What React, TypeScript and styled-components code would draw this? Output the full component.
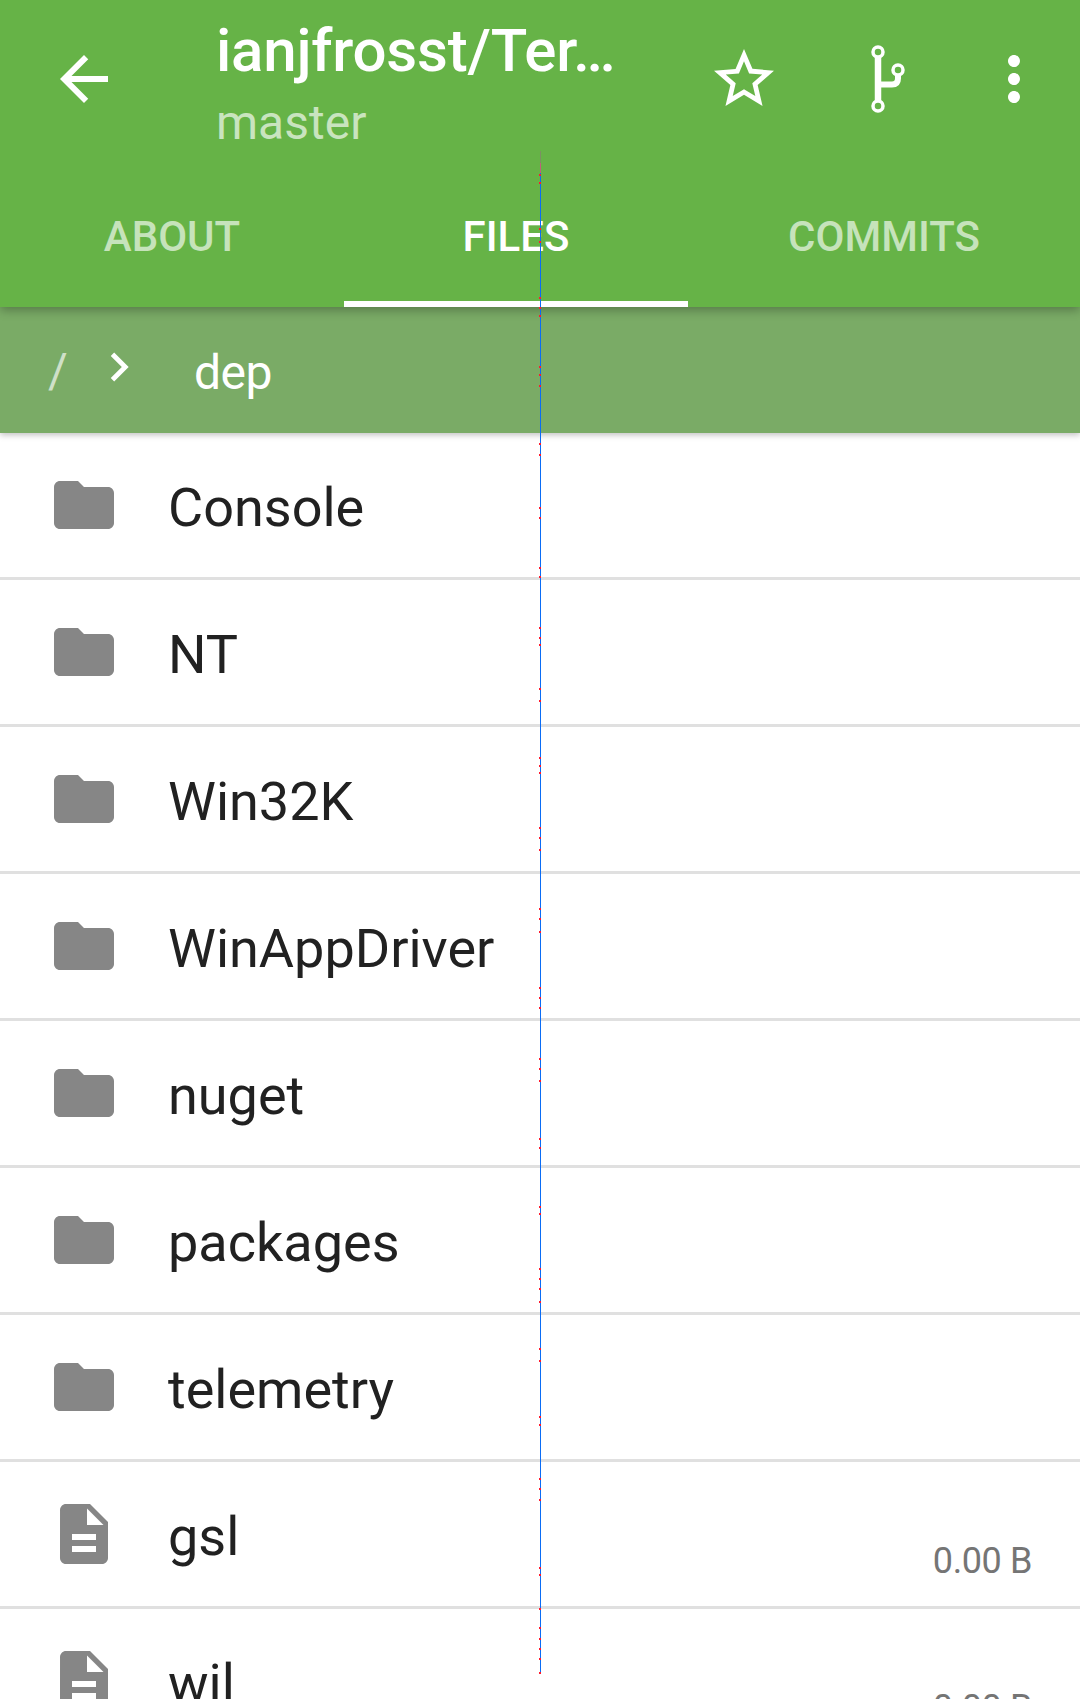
import React from 'react'
import styled, { createGlobalStyle } from 'styled-components'

const entries = [
    { name: 'Console', kind: 'folder' },
    { name: 'NT', kind: 'folder' },
    { name: 'Win32K', kind: 'folder' },
    { name: 'WinAppDriver', kind: 'folder' },
    { name: 'nuget', kind: 'folder' },
    { name: 'packages', kind: 'folder' },
    { name: 'telemetry', kind: 'folder' },
    { name: 'gsl', kind: 'file', size: '0.00 B' },
    { name: 'wil', kind: 'file', size: '0.00 B' },
]

const tabs = [
    { label: 'ABOUT', active: false },
    { label: 'FILES', active: true },
    { label: 'COMMITS', active: false },
]

// layout-bounds marks left on the capture
const traceDots = [
    174, 182, 228, 241, 297, 307, 315, 366, 374, 385, 443, 454, 507, 517, 567, 576, 627, 637, 644, 688, 700,
    757, 765, 772, 827, 837, 849, 908, 918, 931, 987, 997, 1007, 1058, 1068, 1080, 1138, 1147, 1206, 1213,
    1268, 1278, 1288, 1301, 1348, 1360, 1416, 1424, 1478, 1488, 1499, 1567, 1574, 1608, 1627, 1638, 1648,
    1658, 1672,
]

export default function App() {
    return (
        <Screen>
            <GlobalStyle />
            <AppBar>
                <Toolbar>
                    <NavButton>
                        <Icon viewBox='0 0 24 24'>
                            <path d='M20 11H7.83l5.59-5.59L12 4l-8 8 8 8 1.41-1.41L7.83 13H20v-2z' />
                        </Icon>
                    </NavButton>
                    <Titles>
                        <Title>ianjfrosst/Ter…</Title>
                        <Subtitle>master</Subtitle>
                    </Titles>
                    <ActionButton>
                        <Icon viewBox='0 0 24 24'>
                            <path d='M22 9.24l-7.19-.62L12 2 9.19 8.63 2 9.24l5.46 4.73L5.82 21 12 17.27 18.18 21l-1.63-7.03L22 9.24zM12 15.4l-3.76 2.27 1-4.28-3.32-2.88 4.38-.38L12 6.1l1.71 4.04 4.38.38-3.32 2.88 1 4.28L12 15.4z' />
                        </Icon>
                    </ActionButton>
                    <ActionButton>
                        <Icon viewBox='0 0 72 72'>
                            <g fill='none' stroke='#fff'>
                                <circle cx='26' cy='9' r='5' strokeWidth='3.5' />
                                <circle cx='26' cy='63' r='5' strokeWidth='3.5' />
                                <circle cx='46' cy='27' r='5' strokeWidth='3.5' />
                                <path d='M26 14v44' strokeWidth='6.5' />
                                <path d='M26 41.5h14q6 0 6-6V32' strokeWidth='6' />
                            </g>
                        </Icon>
                    </ActionButton>
                    <OverflowButton>
                        <Icon viewBox='0 0 24 24'>
                            <path d='M12 8c1.1 0 2-.9 2-2s-.9-2-2-2-2 .9-2 2 .9 2 2 2zm0 2c-1.1 0-2 .9-2 2s.9 2 2 2 2-.9 2-2-.9-2-2-2zm0 6c-1.1 0-2 .9-2 2s.9 2 2 2 2-.9 2-2-.9-2-2-2z' />
                        </Icon>
                    </OverflowButton>
                </Toolbar>
                <TabBar>
                    {tabs.map(tab => (
                        <Tab key={tab.label} $active={tab.active}>
                            {tab.label}
                        </Tab>
                    ))}
                </TabBar>
            </AppBar>
            <Breadcrumb>
                <RootCrumb>/</RootCrumb>
                <CrumbChevron viewBox='0 0 24 24'>
                    <path d='M10 6L8.59 7.41 13.17 12l-4.58 4.59L10 18l6-6z' />
                </CrumbChevron>
                <Crumb>dep</Crumb>
            </Breadcrumb>
            <FileList>
                {entries.map(entry => (
                    <FileRow key={entry.name}>
                        <RowIcon viewBox='0 0 24 24'>
                            {entry.kind === 'folder' ? (
                                <path d='M10 4H4c-1.1 0-1.99.9-1.99 2L2 18c0 1.1.9 2 2 2h16c1.1 0 2-.9 2-2V8c0-1.1-.9-2-2-2h-8l-2-2z' />
                            ) : (
                                <path d='M14 2H6c-1.1 0-1.99.9-1.99 2L4 20c0 1.1.89 2 1.99 2H18c1.1 0 2-.9 2-2V8l-6-6zm2 16H8v-2h8v2zm0-4H8v-2h8v2zm-3-5V3.5L18.5 9H13z' />
                            )}
                        </RowIcon>
                        <FileName>{entry.name}</FileName>
                        {entry.size && <FileSize>{entry.size}</FileSize>}
                    </FileRow>
                ))}
            </FileList>
            <TraceOverlay viewBox='0 0 3 1699'>
                <rect x='1' y='151' width='1' height='12' fill='#7d8f63' />
                <rect x='1' y='163' width='1' height='10' fill='#c0607a' />
                <rect x='1' y='173' width='1' height='1500' fill='#0a6cf5' />
                {traceDots.map(y => (
                    <rect key={y} x='0' y={y} width='2' height='2' fill='#ff1a2e' />
                ))}
            </TraceOverlay>
        </Screen>
    )
}

const GlobalStyle = createGlobalStyle`
    html, body {
        margin: 0;
        padding: 0;
        background: #fff;
    }
`

const Screen = styled.div`
    position: relative;
    width: 1080px;
    height: 1699px;
    overflow: hidden;
    background: #fff;
    font-family: Roboto, 'Liberation Sans', sans-serif;
`

const AppBar = styled.header`
    position: relative;
    z-index: 2;
    height: 307px;
    background: #66b347;
    box-shadow: 0 3px 10px rgba(0, 0, 0, 0.3);
`

const Toolbar = styled.div`
    display: flex;
    align-items: flex-start;
    height: 163px;
    padding-right: 12px;
`

const NavButton = styled.div`
    display: flex;
    align-items: center;
    justify-content: center;
    flex: none;
    width: 120px;
    height: 158px;
    padding-left: 48px;
    box-sizing: border-box;
`

const ActionButton = styled.div`
    display: flex;
    align-items: center;
    justify-content: center;
    flex: none;
    width: 144px;
    height: 158px;
`

const OverflowButton = styled(ActionButton)`
    width: 108px;
`

const Icon = styled.svg`
    flex: none;
    width: 72px;
    height: 72px;
    fill: #fff;
`

const Titles = styled.div`
    flex: 1;
    min-width: 0;
    padding-left: 96px;
`

const Title = styled.div`
    margin-top: 16px;
    font-size: 60px;
    font-weight: 500;
    line-height: 70px;
    letter-spacing: -0.2px;
    color: #fff;
    white-space: nowrap;
`

const Subtitle = styled.div`
    margin-top: 9px;
    font-size: 48px;
    line-height: 56px;
    color: #c9e4bf;
`

const TabBar = styled.div`
    display: grid;
    grid-template-columns: 344px 344px 392px;
    height: 144px;
`

const Tab = styled.div<{ $active: boolean }>`
    display: flex;
    align-items: center;
    justify-content: center;
    box-sizing: border-box;
    height: 144px;
    padding-top: 8px;
    font-size: 42px;
    font-weight: 500;
    color: ${p => (p.$active ? '#fff' : '#c6e3bb')};
    border-bottom: 6px solid ${p => (p.$active ? '#fff' : 'transparent')};
`

const Breadcrumb = styled.nav`
    position: relative;
    z-index: 1;
    display: flex;
    align-items: center;
    height: 126px;
    padding-left: 48px;
    background: #7aab66;
    box-shadow: 0 2px 6px rgba(0, 0, 0, 0.25);
`

const RootCrumb = styled.span`
    flex: none;
    width: 42px;
    font-size: 48px;
    color: #cfe0c8;
`

const CrumbChevron = styled.svg`
    flex: none;
    width: 58px;
    height: 58px;
    margin-bottom: 6px;
    fill: #fff;
`

const Crumb = styled.span`
    margin-left: 46px;
    padding-top: 4px;
    font-size: 48px;
    letter-spacing: -0.5px;
    color: #fff;
`

const FileList = styled.ul`
    margin: 0;
    padding: 0;
    list-style: none;
`

const FileRow = styled.li`
    display: flex;
    align-items: center;
    box-sizing: border-box;
    height: 147px;
    padding: 0 48px;
    border-bottom: 3px solid #e0e0e0;
`

const RowIcon = styled.svg`
    flex: none;
    width: 72px;
    height: 72px;
    fill: #868686;
`

const FileName = styled.span`
    flex: 1;
    margin-left: 48px;
    padding-top: 4px;
    font-size: 54px;
    color: #212121;
`

const FileSize = styled.span`
    align-self: flex-end;
    margin-bottom: 24px;
    font-size: 36px;
    line-height: 42px;
    letter-spacing: -0.4px;
    color: #757575;
`

const TraceOverlay = styled.svg`
    position: absolute;
    top: 0;
    left: 539px;
    z-index: 3;
    width: 3px;
    height: 1699px;
    pointer-events: none;
`
